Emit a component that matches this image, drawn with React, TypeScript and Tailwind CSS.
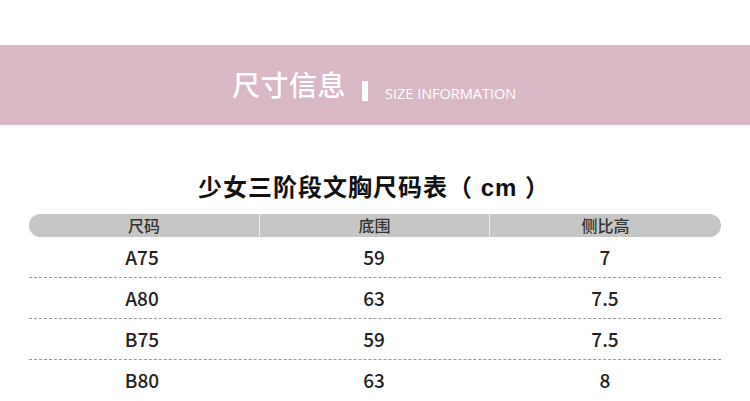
import React from "react";

const rows = [
  { size: "A75", band: "59", diff: "7" },
  { size: "A80", band: "63", diff: "7.5" },
  { size: "B75", band: "59", diff: "7.5" },
  { size: "B80", band: "63", diff: "8" },
];

const cjk = '"Noto Sans CJK SC", sans-serif';

const App = () => {
  return (
    <div
      className="w-[750px] h-[401px] bg-white overflow-hidden"
      style={{ fontFamily: '"Liberation Sans", "Noto Sans CJK SC", sans-serif' }}
    >
      {/* header band */}
      <div className="mt-[45px] h-[80px] bg-[#d9b8c5] flex items-center pl-[232px]">
        <span
          className="text-white text-[28px] font-medium leading-none tracking-[0.5px] mt-[-2px]"
          style={{ fontFamily: cjk }}
        >
          尺寸信息
        </span>
        <span className="ml-[16px] mt-[12px] w-[6px] h-[20px] bg-white" />
        <span
          className="ml-[17px] mt-[18px] text-white text-[14.5px] leading-none"
          style={{ fontFamily: '"Open Sans", sans-serif' }}
        >
          SIZE INFORMATION
        </span>
      </div>

      {/* table title */}
      <div className="mt-[47px] h-[32px] flex justify-center">
        <span className="text-[24px] leading-[32px] font-bold text-[#111] tracking-[1px] ml-[-2px]">
          少女三阶段文胸尺码表（ cm ）
        </span>
      </div>

      {/* table */}
      <div className="mt-[10px] mx-[29px] w-[692px]">
        <div
          className="h-[23px] bg-[#c6c6c6] rounded-full grid grid-cols-[230px_230px_232px] text-[16px] font-medium leading-[23px] text-[#333]"
          style={{ fontFamily: cjk }}
        >
          <div className="text-center">尺码</div>
          <div className="text-center border-l border-white/70">底围</div>
          <div className="text-center border-l border-white/70">侧比高</div>
        </div>
        {rows.map((r, i) => (
          <div
            key={r.size}
            className={`h-[41px] grid grid-cols-[230px_230px_232px] items-center text-[19px] font-medium text-[#222] ${
              i < rows.length - 1 ? "border-b border-dashed border-[#999]" : ""
            }`}
            style={{ fontFamily: cjk }}
          >
            <div className="text-center pr-[4px]">{r.size}</div>
            <div className="text-center">{r.band}</div>
            <div className="text-center">{r.diff}</div>
          </div>
        ))}
      </div>
    </div>
  );
};

export default App;
